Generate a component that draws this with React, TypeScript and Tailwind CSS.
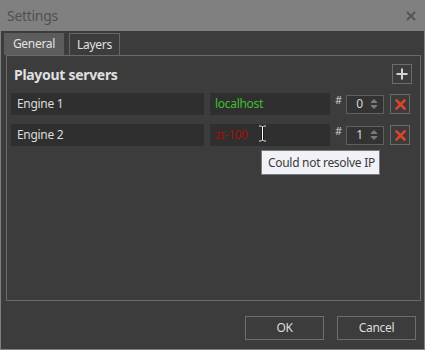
import { ReactNode } from "react";

const font = { fontFamily: '"Noto Sans", "Open Sans", sans-serif' };

function Spinner({ value }: { value: number }) {
  return (
    <div className="w-[38px] h-[19px] border border-[#5f5f5f] bg-[#333333] flex items-center">
      <span className="flex-1 text-center text-[12px] text-[#d8d8d8] pl-[3px]">{value}</span>
      <svg width="10" height="14" viewBox="0 0 10 14" className="mr-[4px]">
        <path d="M2 5.5 L5 2.5 L8 5.5 Z" fill="#7c7c7c" stroke="#7c7c7c" strokeWidth="1" strokeLinejoin="round" />
        <path d="M2 8.5 L5 11.5 L8 8.5 Z" fill="#7c7c7c" stroke="#7c7c7c" strokeWidth="1" strokeLinejoin="round" />
      </svg>
    </div>
  );
}

function SquareButton({ children }: { children: ReactNode }) {
  return (
    <div className="w-[20px] h-[20px] border border-[#6c6c6c] flex items-center justify-center">
      {children}
    </div>
  );
}

function RedX() {
  return (
    <svg width="11" height="11" viewBox="0 0 11 11">
      <path d="M1.5 1.5 L9.5 9.5 M9.5 1.5 L1.5 9.5" stroke="#d9442e" strokeWidth="2.6" strokeLinecap="square" />
    </svg>
  );
}

function ServerRow({ name, host, hostColor, num }: { name: string; host: string; hostColor: string; num: number }) {
  return (
    <div className="flex items-center h-[22px]">
      <div className="w-[193px] h-[22px] bg-[#2f2f2f] flex items-center pl-[6px] text-[12px] text-[#dcdcdc]">{name}</div>
      <div className={`ml-[6px] w-[120px] h-[22px] bg-[#2f2f2f] flex items-center pl-[5px] text-[12px] ${hostColor}`}>{host}</div>
      <span className="ml-[5px] w-[11px] text-[11px] text-[#d0d0d0] self-start mt-[-1px]">#</span>
      <Spinner value={num} />
      <div className="ml-[6px]">
        <SquareButton>
          <RedX />
        </SquareButton>
      </div>
    </div>
  );
}

export default function App() {
  return (
    <div className="relative w-[425px] h-[350px] bg-[#808080] flex flex-col tracking-[-0.3px]" style={font}>
      <div className="h-[31px] flex items-center justify-between pl-[7px] pr-[9px] shrink-0">
        <span className="text-[14px] text-[#505050]">Settings</span>
        <svg width="10" height="10" viewBox="0 0 10 10">
          <path d="M1 1 L9 9 M9 1 L1 9" stroke="#555555" strokeWidth="2" />
        </svg>
      </div>
      <div className="flex-1 mx-[1px] mb-[1px] bg-[#3c3c3c] flex flex-col pl-[5px] pr-[3px]">
        <div className="flex items-end mt-[2px] ml-[-2px] h-[22px] gap-[5px]">
          <div className="w-[60px] h-[22px] bg-[#5c5c5c] flex items-center justify-center text-[12px] text-[#e2e2e2]">
            General
          </div>
          <div className="w-[51px] h-[22px] border border-b-0 border-[#666666] flex items-center justify-center text-[12px] text-[#e2e2e2]">
            Layers
          </div>
        </div>
        <div className="h-[246px] border border-[#6a6a6a] flex flex-col pl-[4px] pr-[8px] pt-[8px]">
          <div className="flex items-center justify-between h-[20px]">
            <span className="pl-[3px] text-[14px] font-bold text-[#e0e0e0]">Playout servers</span>
            <SquareButton>
              <svg width="12" height="12" viewBox="0 0 12 12">
                <path d="M6 0.5 V11.5 M0.5 6 H11.5" stroke="#d4d4d4" strokeWidth="2" />
              </svg>
            </SquareButton>
          </div>
          <div className="mt-[9px] flex flex-col gap-[9px]">
            <ServerRow name="Engine 1" host="localhost" hostColor="text-[#3fbf2f]" num={0} />
            <ServerRow name="Engine 2" host="zt-100" hostColor="text-[#a80c0c]" num={1} />
          </div>
        </div>
        <div className="flex justify-end gap-[13px] mt-[15px] pr-[5px]">
          <div className="w-[79px] h-[24px] border border-[#6e6e6e] flex items-center justify-center text-[12px] text-[#dcdcdc]">
            OK
          </div>
          <div className="w-[79px] h-[24px] border border-[#6e6e6e] flex items-center justify-center text-[12px] text-[#dcdcdc]">
            Cancel
          </div>
        </div>
      </div>

      <svg className="absolute left-[258px] top-[125px]" width="9" height="17" viewBox="0 0 9 17">
        <path d="M1 1 H3.5 L4.5 2 L5.5 1 H8 M4.5 2 V15 M1 16 H3.5 L4.5 15 L5.5 16 H8" fill="none" stroke="#111" strokeWidth="2.2" />
        <path d="M1 1 H3.5 L4.5 2 L5.5 1 H8 M4.5 2 V15 M1 16 H3.5 L4.5 15 L5.5 16 H8" fill="none" stroke="#fff" strokeWidth="1" />
      </svg>

      <div className="absolute left-[261px] top-[150px] w-[119px] h-[25px] bg-[#f1f2f7] border border-[#7a7a7a] flex items-center pl-[6px] text-[12px] text-[#3a3a3a] whitespace-nowrap">
        Could not resolve IP
      </div>
    </div>
  );
}
